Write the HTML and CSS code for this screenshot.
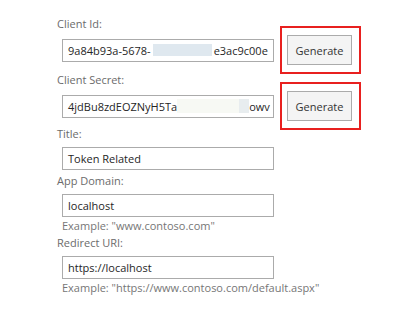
FILE: index.html
```html
<!DOCTYPE html>
<html>
<head>
<meta charset="utf-8">
<link rel="stylesheet" href="styles.css">
</head>
<body>
<form class="form">
  <div class="field field-first">
    <div class="label">Client Id:</div>
    <div class="row">
      <div class="input">9a84b93a-5678-<span class="redact r1"></span>e3ac9c00e</div>
      <div class="mark"><button type="button" class="btn">Generate</button></div>
    </div>
  </div>
  <div class="field field-second">
    <div class="label">Client Secret:</div>
    <div class="row">
      <div class="input">4jdBu8zdEOZNyH5Ta<span class="redact r2"></span><span class="redact r3"></span>owv</div>
      <div class="mark"><button type="button" class="btn">Generate</button></div>
    </div>
  </div>
  <div class="field field-title">
    <div class="label">Title:</div>
    <div class="input">Token Related</div>
  </div>
  <div class="field">
    <div class="label">App Domain:</div>
    <div class="input">localhost</div>
    <div class="hint">Example: "www.contoso.com"</div>
  </div>
  <div class="field">
    <div class="label">Redirect URI:</div>
    <div class="input">https://localhost</div>
    <div class="hint">Example: "https://www.contoso.com/default.aspx"</div>
  </div>
</form>
</body>
</html>
```
FILE: styles.css
```css
html, body {
  margin: 0;
  padding: 0;
  background: #ffffff;
}
body {
  font-family: "Segoe UI", "Open Sans", "Noto Sans", sans-serif;
  font-size: 11px;
  color: #333333;
}
.form {
  padding: 15px 0 0 57px;
  display: flex;
  flex-direction: column;
}
.field {
  display: flex;
  flex-direction: column;
}
.field-first {
  margin-bottom: 6px;
}
.field-second {
  margin-bottom: 4px;
}
.field-title {
  margin-bottom: 2px;
}
.label {
  color: #6b6b6b;
  line-height: 18px;
  height: 18px;
}
.row {
  display: flex;
  align-items: center;
  margin-top: 2px;
  margin-left: 5px;
}
.input {
  box-sizing: border-box;
  width: 212px;
  height: 23px;
  border: 1px solid #ababab;
  padding: 0 5px;
  line-height: 21px;
  white-space: nowrap;
  overflow: hidden;
  color: #262626;
  display: flex;
  align-items: center;
}
.field > .input {
  margin-left: 5px;
  margin-top: 4px;
}
.redact {
  display: inline-block;
  height: 12px;
  flex: none;
}
.r1 {
  width: 59px;
  margin: 0 2px;
  background: #dfe8ef;
}
.r2 {
  width: 62px;
  height: 14px;
  background: #f7f9f4;
}
.r3 {
  width: 10px;
  height: 14px;
  background: #e8edef;
}
.mark {
  position: relative;
  margin-left: 13px;
  display: flex;
}
.mark::after {
  content: "";
  position: absolute;
  left: -7px;
  right: -9px;
  top: -9px;
  bottom: -9px;
  border: 2px solid #e8201f;
}
.btn {
  box-sizing: border-box;
  width: 65px;
  height: 30px;
  border: 1px solid #ababab;
  background: #f4f4f4;
  color: #333333;
  font-family: inherit;
  font-size: 11px;
  padding: 0;
}
.hint {
  color: #767676;
  line-height: 16px;
  margin-left: 5px;
  margin-top: 1px;
}
```
